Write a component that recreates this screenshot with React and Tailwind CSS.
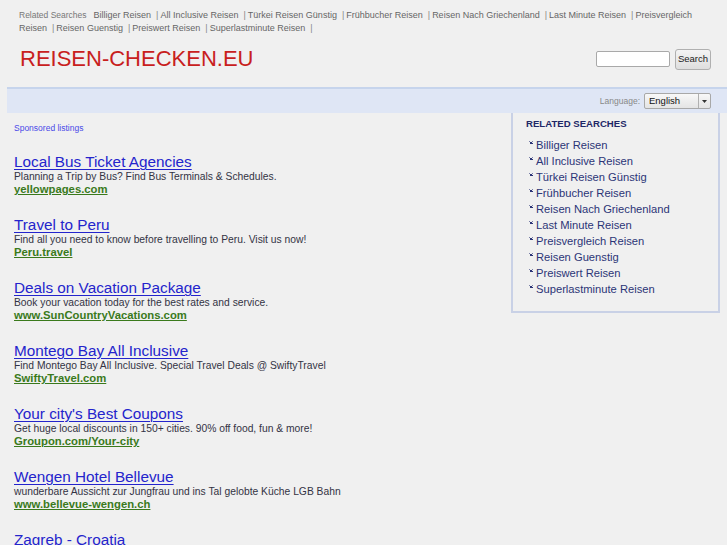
import React from "react";

const topLinks = [
  "Billiger Reisen",
  "All Inclusive Reisen",
  "Türkei Reisen Günstig",
  "Frühbucher Reisen",
  "Reisen Nach Griechenland",
  "Last Minute Reisen",
  "Preisvergleich Reisen",
  "Reisen Guenstig",
  "Preiswert Reisen",
  "Superlastminute Reisen",
];

const ads = [
  { t: "Local Bus Ticket Agencies", d: "Planning a Trip by Bus? Find Bus Terminals & Schedules.", u: "yellowpages.com" },
  { t: "Travel to Peru", d: "Find all you need to know before travelling to Peru. Visit us now!", u: "Peru.travel" },
  { t: "Deals on Vacation Package", d: "Book your vacation today for the best rates and service.", u: "www.SunCountryVacations.com" },
  { t: "Montego Bay All Inclusive", d: "Find Montego Bay All Inclusive. Special Travel Deals @ SwiftyTravel", u: "SwiftyTravel.com" },
  { t: "Your city's Best Coupons", d: "Get huge local discounts in 150+ cities. 90% off food, fun & more!", u: "Groupon.com/Your-city" },
  { t: "Wengen Hotel Bellevue", d: "wunderbare Aussicht zur Jungfrau und ins Tal gelobte Küche LGB Bahn", u: "www.bellevue-wengen.ch" },
  { t: "Zagreb - Croatia" },
];

function Bullet() {
  return (
    <svg width="5" height="4" viewBox="0 0 5 4" className="ml-[1px] mr-[2px] mt-[-5px] shrink-0">
      <rect x="0" y="0" width="1" height="1" fill="#7a80a8" />
      <rect x="3" y="0" width="1" height="1" fill="#7a80a8" />
      <rect x="1" y="1" width="2" height="1" fill="#2c3577" />
      <rect x="1" y="2" width="3" height="1" fill="#2c3577" />
    </svg>
  );
}

export default function App() {
  return (
    <div
      className="h-[545px] w-[727px] overflow-hidden bg-[#f0f0f0]"
      style={{ fontFamily: '"Liberation Sans", Arial, sans-serif' }}
    >
      {/* top related links */}
      <div className="pl-[19px] pt-[9px] w-[702px] text-[9px] leading-[13px] text-[#6a6a6a]">
        <span className="text-[8.5px] text-[#777] mr-[7px]">Related Searches</span>
        {topLinks.map((l, i) => (
          <React.Fragment key={i}>
            <a className="text-[#666]">{l}</a>
            <span className="ml-[5px] mr-[2px] text-[#888]">|</span>
            <wbr />
          </React.Fragment>
        ))}
      </div>

      {/* logo + search */}
      <div className="h-[48px] mb-[4px] flex items-center justify-between pl-[20px] pr-[16px]">
        <div className="text-[22px] leading-[26px] text-[#c8201d]">REISEN-CHECKEN.EU</div>
        <div className="flex items-center gap-[5px]">
          <input className="w-[74px] h-[16px] bg-white border border-[#a9a9a9] rounded-[2px]" />
          <button className="w-[36px] h-[21px] border border-[#b0b0b0] rounded-[3px] bg-[linear-gradient(#f4f4f4,#dedede)] text-[9.5px] text-[#222]">
            Search
          </button>
        </div>
      </div>

      {/* blue bar */}
      <div className="ml-[7px] h-[26px] border-t-2 border-[#c6d4ec] bg-[#dfe6f5] flex items-center justify-end pr-[16px]">
        <span className="text-[8.5px] text-[#888] mr-[4px]">Language:</span>
        <div className="w-[67px] h-[16px] flex items-stretch border border-[#a8a8a8] rounded-[2px] bg-[linear-gradient(#f8f8f8,#e4e4e4)]">
          <span className="flex-1 pl-[4px] text-[9.5px] leading-[14px] text-[#111]">English</span>
          <span className="w-[12px] border-l border-[#b0b0b0] flex items-center justify-center">
            <svg width="5" height="3" viewBox="0 0 5 3"><path d="M0 0 H5 L2.5 3 Z" fill="#333" /></svg>
          </span>
        </div>
      </div>

      {/* content */}
      <div className="ml-[7px] flex">
        <div className="w-[504px] pl-[7px] pt-[9px]">
          <div className="text-[8.5px] leading-[12px] text-[#4a4ae8]">Sponsored listings</div>
          <div className="mt-[20px]">
            {ads.map((a, i) => (
              <div key={i} className="mb-[21px]">
                <div className="text-[15.3px] leading-[16px] text-[#2424cc] underline underline-offset-[2px] decoration-[1px]">{a.t}</div>
                {a.d && <div className="text-[10.3px] leading-[13px] text-[#333344]">{a.d}</div>}
                {a.u && <div className="text-[11.3px] leading-[13px] font-bold text-[#3a7a1c] underline underline-offset-[1px]">{a.u}</div>}
              </div>
            ))}
          </div>
        </div>

        <div className="w-[209px] h-[200px] border-x-2 border-b-2 border-[#c9d1e6] pl-[13px] pt-[5px]">
          <div className="text-[9.6px] leading-[12px] font-bold text-[#1e2766]">RELATED SEARCHES</div>
          <ul className="mt-[7px] pl-[2px]">
            {topLinks.map((l, i) => (
              <li key={i} className="flex items-center h-[16px] text-[11.2px] text-[#2c3577]">
                <Bullet />
                <span>{l}</span>
              </li>
            ))}
          </ul>
        </div>
      </div>
    </div>
  );
}
